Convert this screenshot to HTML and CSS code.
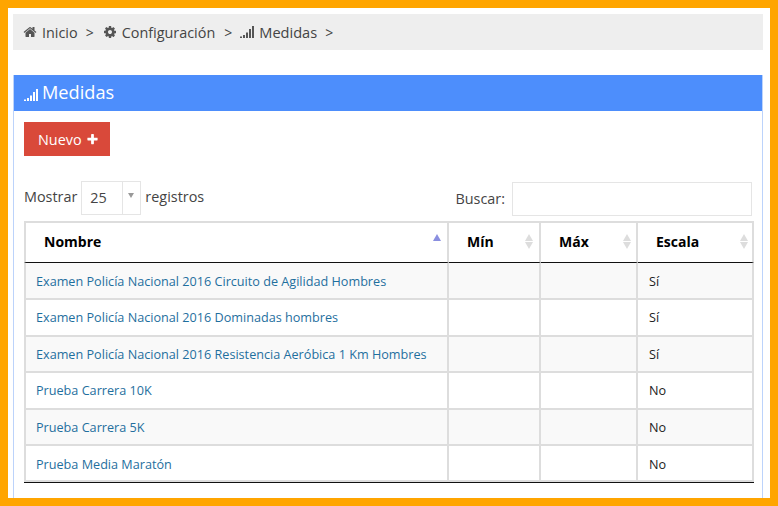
FILE: index.html
```html
<!DOCTYPE html>
<html lang="es">
<head>
<meta charset="utf-8">
<title>Medidas</title>
<link rel="stylesheet" href="styles.css">
</head>
<body>
<div class="frame">
  <nav class="crumbs">
    <svg class="ico ico-home" viewBox="0 0 1792 1792"><path d="M1472 992v480q0 26-19 45t-45 19h-384v-384h-256v384h-384q-26 0-45-19t-19-45v-480q0-1 .5-3t.5-3l575-474 575 474q1 2 1 6zm223-69l-62 74q-8 9-21 11h-3q-13 0-21-7l-692-577-692 577q-12 8-24 7-13-2-21-11l-62-74q-8-10-7-23.500t11-21.500l719-599q32-26 76-26t76 26l244 204v-195q0-14 9-23t23-9h192q14 0 23 9t9 23v408l219 182q10 8 11 21.500t-7 23.500z"/></svg>
    <span class="crumb">Inicio</span><span class="sep">&gt;</span>
    <svg class="ico ico-cog" viewBox="0 0 1792 1792"><path d="M1152 896q0-106-75-181t-181-75-181 75-75 181 75 181 181 75 181-75 75-181zm512-109v222q0 12-8 23t-20 13l-185 28q-19 54-39 91 35 50 107 138 10 12 10 25t-9 23q-27 37-99 108t-94 71q-12 0-26-9l-138-108q-44 23-91 38-16 136-29 186-7 28-36 28h-222q-14 0-24.500-8.500t-11.500-21.500l-28-184q-49-16-90-37l-141 107q-10 9-25 9-14 0-25-11-126-114-165-168-7-10-7-23 0-12 8-23 15-21 51-66.500t54-70.500q-27-50-41-99l-183-27q-13-2-21-12.500t-8-23.500v-222q0-12 8-23t19-13l186-28q14-46 39-92-40-57-107-138-10-12-10-24 0-10 9-23 26-36 98.500-107.500t94.500-71.500q13 0 26 10l138 107q44-23 91-38 16-136 29-186 7-28 36-28h222q14 0 24.500 8.500t11.500 21.500l28 184q49 16 90 37l142-107q9-9 24-9 13 0 25 10 129 119 165 170 7 8 7 22 0 12-8 23-15 21-51 66.500t-54 70.500q26 50 41 98l183 28q13 2 21 12.500t8 23.500z"/></svg>
    <span class="crumb">Configuración</span><span class="sep sep-tight">&gt;</span>
    <svg class="ico ico-signal" viewBox="0 0 14 12"><rect x="0" y="10.500" width="2" height="1.500"/><rect x="3" y="9" width="2" height="3"/><rect x="6" y="6.500" width="2" height="5.500"/><rect x="9" y="3" width="2" height="9"/><rect x="12" y="0" width="2" height="12"/></svg>
    <span class="crumb crumb-last">Medidas</span><span class="sep sep-last">&gt;</span>
  </nav>

  <section class="panel">
    <header class="panel-head">
      <svg class="ico-signal-head" viewBox="0 0 14 12"><rect x="0" y="10.500" width="2" height="1.500"/><rect x="3" y="9" width="2" height="3"/><rect x="6" y="6.500" width="2" height="5.500"/><rect x="9" y="3" width="2" height="9"/><rect x="12" y="0" width="2" height="12"/></svg>
      <span>Medidas</span>
    </header>
    <div class="panel-body">
      <a class="btn" href="#">Nuevo <svg class="ico-plus" viewBox="0 0 1792 1792"><path d="M1600 736v192q0 40-28 68t-68 28h-416v416q0 40-28 68t-68 28h-192q-40 0-68-28t-28-68v-416h-416q-40 0-68-28t-28-68v-192q0-40 28-68t68-28h416v-416q0-40 28-68t68-28h192q40 0 68 28t28 68v416h416q40 0 68 28t28 68z"/></svg></a>
      <div class="controls">
        <div class="length">
          <span class="ctl-label">Mostrar</span>
          <div class="select"><span class="select-val">25</span><span class="select-arrow"></span></div>
          <span class="ctl-label">registros</span>
        </div>
        <div class="search">
          <span class="ctl-label">Buscar:</span>
          <input class="search-input" type="text" aria-label="Buscar">
        </div>
      </div>
      <table class="data">
        <colgroup><col class="c1"><col class="c2"><col class="c3"><col class="c4"></colgroup>
        <thead>
          <tr>
            <th>Nombre<span class="sort sort-asc"></span></th>
            <th>Mín<span class="sort"></span></th>
            <th>Máx<span class="sort"></span></th>
            <th>Escala<span class="sort"></span></th>
          </tr>
        </thead>
        <tbody>
          <tr><td><a href="#">Examen Policía Nacional 2016 Circuito de Agilidad Hombres</a></td><td></td><td></td><td>Sí</td></tr>
          <tr class="row-up"><td><a href="#">Examen Policía Nacional 2016 Dominadas hombres</a></td><td></td><td></td><td>Sí</td></tr>
          <tr class="row-short"><td><a href="#">Examen Policía Nacional 2016 Resistencia Aeróbica 1 Km Hombres</a></td><td></td><td></td><td>Sí</td></tr>
          <tr class="row-up"><td><a href="#">Prueba Carrera 10K</a></td><td></td><td></td><td>No</td></tr>
          <tr class="row-short"><td><a href="#">Prueba Carrera 5K</a></td><td></td><td></td><td>No</td></tr>
          <tr class="row-short row-down"><td><a href="#">Prueba Media Maratón</a></td><td></td><td></td><td>No</td></tr>
        </tbody>
      </table>
    </div>
  </section>
</div>
</body>
</html>
```
FILE: styles.css
```css
* { box-sizing: border-box; }
html, body { margin: 0; padding: 0; height: 100%; }
body {
  font-family: "Open Sans", sans-serif;
  font-size: 14.400px;
  color: #444;
  background: #fff;
  overflow: hidden;
}
.frame {
  height: 506px;
  border: 8px solid #ffa500;
  padding: 6px 7px 0 5px;
  overflow: hidden;
  background: #fff;
}
.crumbs {
  height: 36px;
  background: #eee;
  display: flex;
  align-items: center;
  padding-left: 10px;
  color: #444;
}
.crumb-last { font-size: 14.600px; }
.sep { font-size: 14px; margin: 0 9px 0 8px; }
.sep-tight { margin: 0 8px 0 9px; }
.sep-last { margin-left: 8px; }
.ico { fill: #555; flex: none; }
.ico-home { width: 14px; height: 14px; margin-right: 5px; }
.ico-cog { width: 14px; height: 14px; margin-right: 5px; }
.ico-signal { width: 14px; height: 12px; margin-right: 5px; }
.panel {
  margin-top: 25px;
  height: 430px;
  border-left: 1px solid #bcd3fb;
  border-right: 1px solid #bcd3fb;
}
.panel-head {
  height: 36px;
  background: #4d8efc;
  color: #fff;
  font-size: 18.200px;
  display: flex;
  align-items: center;
  padding: 0 0 2px 10px;
}
.ico-signal-head { width: 14px; height: 12px; fill: #fff; margin-right: 4px; margin-top: 5px; }
.panel-body { padding: 11px 8px 0 10px; }
.btn {
  display: inline-flex;
  align-items: center;
  height: 34px;
  width: 86px;
  padding-left: 14px;
  background: #d9493a;
  color: #fff;
  text-decoration: none;
}
.ico-plus { width: 13px; height: 13px; fill: #fff; margin-left: 4px; }
.controls {
  display: flex;
  justify-content: space-between;
  align-items: flex-start;
  margin: 25px 2px 0 0;
  height: 35px;
}
.length, .search { display: flex; align-items: center; height: 34px; }
.search { margin-top: 1px; }
.ctl-label { margin-top: -2px; }
.length .ctl-label { margin-top: -3px; }
.select {
  width: 60px;
  height: 34px;
  margin: 0 4px;
  border: 1px solid #e5e5e5;
  display: flex;
  align-items: center;
}
.select-val { width: 40px; padding-left: 8px; margin-top: -2px; }
.select-arrow {
  flex: 1;
  height: 100%;
  border-left: 1px solid #e5e5e5;
  position: relative;
}
.select-arrow::after {
  content: "";
  position: absolute;
  left: 5px;
  top: 11px;
  border-left: 3px solid transparent;
  border-right: 3px solid transparent;
  border-top: 5px solid #999;
}
.search .ctl-label { margin-right: 7px; }
.search-input {
  width: 240px;
  height: 34px;
  border: 1px solid #e5e5e5;
  background: #fff;
  padding: 0;
  outline: none;
}
.data {
  margin: 5px 0 0 0;
  width: 730px;
  table-layout: fixed;
  border-collapse: separate;
  border-spacing: 0;
  font-size: 12.650px;
  color: #222;
  border-bottom: 1px solid #111;
}
.c1 { width: 425px; }
.c2 { width: 92px; }
.c3 { width: 97px; }
.c4 { width: 116px; }
.data th, .data td {
  border-right: 2px solid #ddd;
  border-bottom: 2px solid #ddd;
  text-align: left;
  padding: 0 0 0 11px;
}
.data th:first-child, .data td:first-child { border-left: 2px solid #ddd; }
.data td:first-child { padding-left: 10px; }
.data thead th {
  height: 42px;
  color: #000;
  font-weight: 700;
  font-size: 14px;
  padding: 0 0 2px 18px;
  position: relative;
  border-top: 2px solid #ddd;
  border-bottom: 1px solid #111;
}
.data tbody td { height: 37px; }
.data tbody .row-short td { height: 36px; }
.data tbody .row-up td { padding-bottom: 2px; }
.data tbody .row-down td { padding-top: 2px; }
.data tbody tr:nth-child(odd) td { background: #f9f9f9; }
.data a { color: #1f6f9e; text-decoration: none; }
.sort {
  position: absolute;
  right: 5px;
  top: 11px;
  width: 9px;
  height: 15px;
}
.data th:nth-child(3) .sort { right: 4px; }
.data th:nth-child(4) .sort { right: 3px; }
.sort::before, .sort::after {
  content: "";
  position: absolute;
  left: 0;
  border-left: 4.500px solid transparent;
  border-right: 4.500px solid transparent;
}
.sort::before { top: 0; border-bottom: 7px solid #ddd; }
.sort::after { bottom: 0; border-top: 7px solid #ddd; }
.sort-asc::before { border-bottom-color: #8a8fe0; }
.sort-asc::after { display: none; }
```
